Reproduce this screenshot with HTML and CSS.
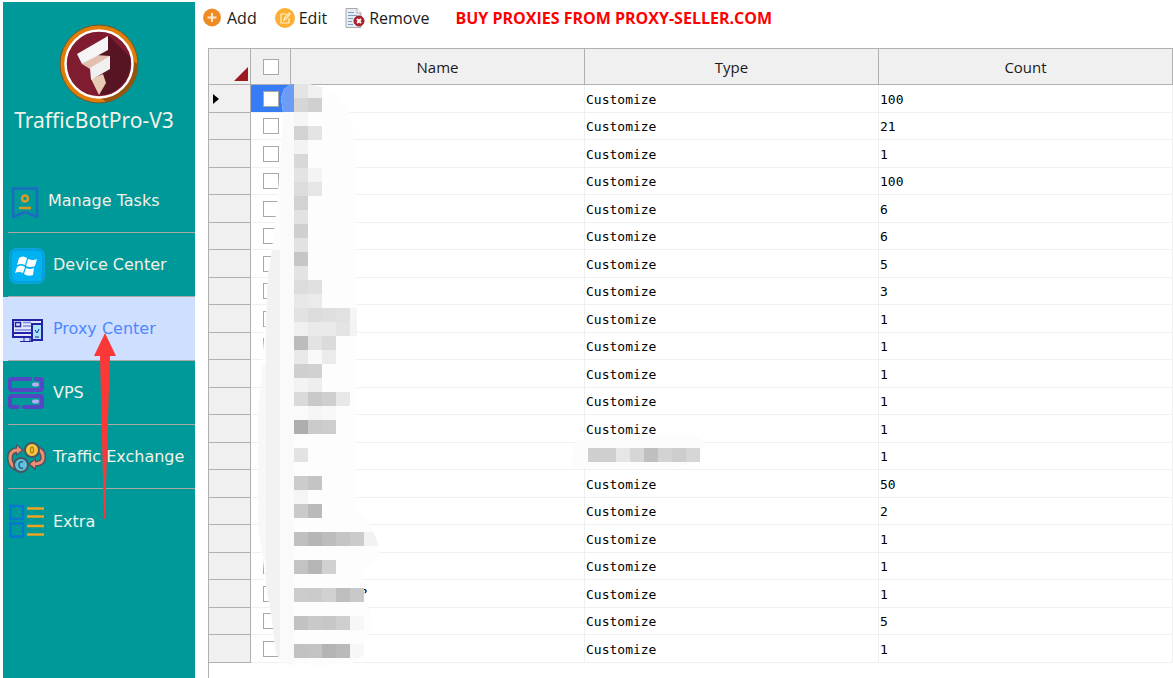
FILE: index.html
```html
<!DOCTYPE html>
<html lang="en">
<head>
    <meta charset="UTF-8">
    <meta name="viewport" content="width=device-width, initial-scale=1.0">
    <title>TrafficBotPro-V3</title>
    <link rel="stylesheet" href="styles.css">
</head>
<body>
    <aside class="sidebar">
      <svg class="logo" viewBox="0 0 80 80" aria-hidden="true">
        <circle cx="40" cy="40" r="39" fill="#e07d08" stroke="#6b5a2c" stroke-width="1"/>
        <path d="M79 40A39 39 0 0 1 47 78L40 72L72 36Z" fill="#96550f"/>
        <circle cx="40" cy="40" r="33.500" fill="#7f1c30" stroke="#fff" stroke-width="2.500"/>
        <path d="M50 12L71 33A32 32 0 0 1 44 71L39 69L31 55L36 44L24 39Z" fill="#571422"/>
        <path d="M23 40L37 31L51 32L50 38L31 45Z" fill="#e2bfae"/>
        <path d="M32 55L44 50L47 59L40 71Z" fill="#e8cbb4"/>
        <path d="M18 30L49 12V26L23 40Z" fill="#f5f5f5"/>
        <path d="M31 44L51 32V45L32 56Z" fill="#f0f0f0"/>
      </svg>
      <h1 class="brand">TrafficBotPro-V3</h1>
      <ul class="menu">
        <li>
          <a href="#tasks">
            <svg class="icon icon-small" viewBox="0 0 35 40" fill="none">
              <path d="M7 7.500H31V36L19 31L7 36Z" stroke="#1b6cc0" stroke-width="2.500" stroke-linejoin="round"/>
              <circle cx="19" cy="17.500" r="3" stroke="#d99a22" stroke-width="2.500"/>
              <path d="M13 27H25" stroke="#d99a22" stroke-width="2.500"/>
            </svg>
            Manage Tasks
          </a>
        </li>
        <li>
          <a href="#devices">
            <svg class="icon" viewBox="0 0 40 40">
              <rect x="3" y="3" width="36" height="36" rx="8" fill="#0aa5e2"/>
              <rect x="5" y="5" width="32" height="32" rx="6" fill="#00b2f2" stroke="#0894cf"/>
              <path d="M13 13Q17 10 21 13L19 20Q15 18 11 20ZM22 14Q27 16 31 14L29 21Q25 23 20 21ZM11 22Q15 19 19 22L17 28Q13 26 9 28ZM20 23Q24 25 28 23L27 30Q22 32 18 29Z" fill="#fff"/>
            </svg>
            Device Center
          </a>
        </li>
        <li class="active">
          <a href="#proxies">
            <svg class="icon" viewBox="0 0 40 40" fill="none" stroke="#2323a8">
              <path d="M7 11H36V28H7Z" fill="#e3e6ff" stroke-width="2"/>
              <path d="M7 24H26" stroke-width="2"/>
              <path d="M9.500 13.500H14.500V17.500H9.500Z" stroke-width="1.500"/>
              <path d="M17 13.500H25M17 17H25M9 21H25" stroke="#7b88dc" stroke-width="1.500"/>
              <path d="M18 28V32M24 28V32M14 32.500H27"/>
              <rect x="26" y="15" width="10" height="16" fill="#a9e4fb" stroke-width="2"/>
              <path d="M29 21L31 24L33 20M29 28H33"/>
            </svg>
            Proxy Center
          </a>
        </li>
        <li>
          <a href="#vps">
            <svg class="icon" viewBox="0 0 40 40" fill="none" stroke="#5546c4" stroke-width="4" stroke-linecap="round">
              <path d="M24 6H6Q4 6 4 8V15Q4 17 6 17H34Q36 17 36 15V8Q36 6 34 6H30"/>
              <path d="M12 34H6Q4 34 4 32V25Q4 23 6 23H34Q36 23 36 25V32Q36 34 34 34H18"/>
              <path d="M28 11.500H31M28 28.500H31" stroke="#b9aef5"/>
            </svg>
            VPS
          </a>
        </li>
        <li>
          <a href="#exchange">
            <svg class="icon" viewBox="0 0 40 40" fill="none">
              <path d="M10 31Q4 28 4 21Q4 13 13 13M30 12Q38 13 37 22Q36 27 28 27" stroke="#4a5560" stroke-width="6"/>
              <path d="M10 7L18 13L10 19ZM30 21L22 27L30 34Z" fill="#4a5560"/>
              <path d="M10 31Q4 28 4 21Q4 13 12 13M31 12Q38 14 37 22Q36 27 28 27" stroke="#ee8d70" stroke-width="3"/>
              <path d="M11 9L16 13L11 17ZM29 23L24 27L29 31Z" fill="#ee8d70"/>
              <circle cx="26" cy="13" r="7" fill="#fbc840" stroke="#4a5560" stroke-width="2"/>
              <ellipse cx="26" cy="13" rx="1.500" ry="3" stroke="#b98517" stroke-width="1.500"/>
              <circle cx="15" cy="28" r="7" fill="#62c1dd" stroke="#4a5560" stroke-width="2"/>
              <path d="M17 25Q13 24 13 28Q13 32 17 31" stroke="#23617a" stroke-width="1.500"/>
            </svg>
            Traffic Exchange
          </a>
        </li>
        <li>
          <a href="#extra">
            <svg class="icon" viewBox="0 0 40 40" fill="none" stroke-width="2.500">
              <path d="M4.500 5H17V18H4.500ZM4.500 22.500H17V35.500H4.500Z" stroke="#0478cf"/>
              <path d="M21 7.500H38M21 15.500H38M21 25H38M21 33.500H38" stroke="#eda321"/>
            </svg>
            Extra
          </a>
        </li>
      </ul>
    </aside>

    <main class="content">
      <div class="toolbar">
        <button type="button">
          <svg viewBox="0 0 20 20"><circle cx="9" cy="9.500" r="9" fill="#f08a24"/><path d="M9 5V14M4.500 9.500H13.500" stroke="#ffe9d2" stroke-width="2"/></svg>
          Add
        </button>
        <button type="button">
          <svg viewBox="0 0 20 20" fill="none"><circle cx="10" cy="10" r="10" fill="#fbb034"/><path d="M11 6H6V15H14V10M9 12L10 9L14 5L15 6L11 11Z" stroke="#fff0cf" stroke-width="1.200"/></svg>
          Edit
        </button>
        <button type="button">
          <svg viewBox="0 0 20 20"><path d="M1 .5H12L16 5V19.500H1Z" fill="#e9edf2" stroke="#a7a9ac"/><path d="M12 .5V5H16" fill="#fff" stroke="#a7a9ac"/><path d="M3 4.500H9M3 7.500H12M3 10.500H8M3 13.500H7M3 16.500H8" stroke="#7f9cc4"/><circle cx="14" cy="13" r="5" fill="#b5202f" stroke="#8c1a27"/><path d="M12 11L16 15M16 11L12 15" stroke="#fff" stroke-width="1.800"/></svg>
          Remove
        </button>
        <a class="promo" href="#buy">BUY PROXIES FROM PROXY-SELLER.COM</a>
      </div>

      <div class="grid">
        <table>
          <colgroup>
            <col class="col-marker">
            <col class="col-check">
            <col>
            <col>
            <col>
          </colgroup>
          <thead>
            <tr>
              <th class="corner"><svg viewBox="0 0 14 14"><path d="M14 0V14H0Z" fill="#9b1c20"/></svg></th>
              <th class="check"><input type="checkbox" aria-label="Select all"></th>
              <th>Name</th>
              <th>Type</th>
              <th>Count</th>
            </tr>
          </thead>
          <tbody>
            <tr class="current"><th><svg viewBox="0 0 6 10"><path d="M0 0L6 5L0 10Z"/></svg></th><td class="check"><input type="checkbox" aria-label="Select row"></td><td></td><td>Customize</td><td>100</td></tr>
            <tr><th></th><td class="check"><input type="checkbox" aria-label="Select row"></td><td></td><td>Customize</td><td>21</td></tr>
            <tr><th></th><td class="check"><input type="checkbox" aria-label="Select row"></td><td></td><td>Customize</td><td>1</td></tr>
            <tr><th></th><td class="check"><input type="checkbox" aria-label="Select row"></td><td></td><td>Customize</td><td>100</td></tr>
            <tr><th></th><td class="check"><input type="checkbox" aria-label="Select row"></td><td></td><td>Customize</td><td>6</td></tr>
            <tr><th></th><td class="check"><input type="checkbox" aria-label="Select row"></td><td></td><td>Customize</td><td>6</td></tr>
            <tr><th></th><td class="check"><input type="checkbox" aria-label="Select row"></td><td></td><td>Customize</td><td>5</td></tr>
            <tr><th></th><td class="check"><input type="checkbox" aria-label="Select row"></td><td></td><td>Customize</td><td>3</td></tr>
            <tr><th></th><td class="check"><input type="checkbox" aria-label="Select row"></td><td></td><td>Customize</td><td>1</td></tr>
            <tr><th></th><td class="check"><input type="checkbox" aria-label="Select row"></td><td></td><td>Customize</td><td>1</td></tr>
            <tr><th></th><td class="check"><input type="checkbox" aria-label="Select row"></td><td></td><td>Customize</td><td>1</td></tr>
            <tr><th></th><td class="check"><input type="checkbox" aria-label="Select row"></td><td></td><td>Customize</td><td>1</td></tr>
            <tr><th></th><td class="check"><input type="checkbox" aria-label="Select row"></td><td></td><td>Customize</td><td>1</td></tr>
            <tr><th></th><td class="check"><input type="checkbox" aria-label="Select row"></td><td></td><td class="masked"><svg class="mask-type" viewBox="572 434 136 36"><path d="M572 450Q576 438 588 438L640 435H690Q704 438 703 446Q702 456 696 462L672 468H572Z" fill="#fcfcfc"/></svg></td><td>1</td></tr>
            <tr><th></th><td class="check"><input type="checkbox" aria-label="Select row"></td><td></td><td>Customize</td><td>50</td></tr>
            <tr><th></th><td class="check"><input type="checkbox" aria-label="Select row"></td><td></td><td>Customize</td><td>2</td></tr>
            <tr><th></th><td class="check"><input type="checkbox" aria-label="Select row"></td><td></td><td>Customize</td><td>1</td></tr>
            <tr><th></th><td class="check"><input type="checkbox" aria-label="Select row"></td><td></td><td>Customize</td><td>1</td></tr>
            <tr><th></th><td class="check"><input type="checkbox" aria-label="Select row"></td><td></td><td>Customize</td><td>1</td></tr>
            <tr><th></th><td class="check"><input type="checkbox" aria-label="Select row"></td><td></td><td>Customize</td><td>5</td></tr>
            <tr><th></th><td class="check"><input type="checkbox" aria-label="Select row"></td><td></td><td>Customize</td><td>1</td></tr>
          </tbody>
        </table>

        <svg class="mask-names" viewBox="250 84 136 586">
          <clipPath id="brush">
            <path d="M291 84L284 89L281 98L283 112L280 165L277 205L272 250L268 275L266 320L263 350L262 370L258 415V530L262 550L265 580L272 620L276 654L285 664L294 665L305 662L320 669L335 662L350 665L364 655V640L371 630V615L367 602L364 590L362 570L373 564L380 556L377 540L370 525L357 510V330L356 150L350 112L340 97L325 88L308 84Z"/>
          </clipPath>
          <text class="leftover" x="360" y="598">?</text>
          <g id="names" clip-path="url(#brush)">
            <path d="M250 84H386V670H250Z" fill="#fdfdfd"/>
            <path d="M250 364H266V560H250Z" fill="#f8f8f8"/>
            <path d="M266 250H280V670H266Z" fill="#f2f2f2"/>
            <path d="M280 112H294V670H280Z" fill="#fafafa"/>
            <path d="M280 84H294V112H280Z" fill="#6c9cf6"/>
          </g>
        </svg>
      </div>
    </main>

    <svg class="pointer" viewBox="0 0 24 186" aria-hidden="true">
      <path d="M12 0L23 23H17L12 186H11L7 23H1Z" fill="#fb3838"/>
    </svg>

    <script>
      const size = 14;

      // grey levels per line of mosaic, left to right
      const names = {
        84: "e4 f0", 98: "d6 d0", 112: "f5", 126: "d2 e4", 140: "f3", 154: "d8",
        168: "e3 f4", 182: "dc e6", 196: "d2", 210: "e2", 224: "cf", 238: "e2",
        252: "c6", 266: "e3", 280: "dc e0", 294: "e8 eb", 308: "e2 dc df e1 f5",
        322: "f0 ea ea e4 f3", 336: "bc e3 db", 350: "e9 f9 eb", 364: "cf d1",
        378: "f3 ee", 392: "da c9 cf e8", 406: "fa f6 f8", 420: "ae cb cd",
        448: "e3", 476: "cc c4", 490: "f5", 504: "ca ba", 532: "c0 b6 bd c5 cb f2",
        560: "c3 b6 d1", 588: "cc cb d1 be c9", 616: "c2 c9 c7 cf f7", 644: "c2 c3 b4 ba f7"
      };

      function drawLine(parent, x, y, line) {
        line.split(" ").forEach((grey, i) => {
          const rect = document.createElementNS("http://www.w3.org/2000/svg", "rect");
          rect.setAttribute("x", x + i * size);
          rect.setAttribute("y", y);
          rect.setAttribute("width", size);
          rect.setAttribute("height", size);
          rect.setAttribute("fill", "#" + grey.repeat(3));
          parent.appendChild(rect);
        });
      }

      for (const y in names) {
        drawLine(document.getElementById("names"), 294, Number(y), names[y]);
      }
      drawLine(document.querySelector(".mask-type"), 588, 448, "cf cf e6 d6 bf d3 cd d6");
    </script>
</body>
</html>
```
FILE: styles.css
```css
* {
  box-sizing: border-box;
}
body {
  margin: 0;
  min-height: 100vh;
  display: flex;
  position: relative;
  background-color: #fff;
  color: #1a1a1a;
  font-family: "Open Sans", "Noto Sans", sans-serif;
  font-size: 16px;
}
.sidebar {
  flex: 0 0 192px;
  margin: 2px 0 0 3px;
  padding-top: 22px;
  background-color: #009999;
}
.logo {
  display: block;
  width: 80px;
  height: 80px;
  margin: 0 auto;
}
.brand {
  margin: 0 0 33px;
  padding-right: 10px;
  text-align: center;
  color: #f2f2e8;
  font-family: "Noto Sans", sans-serif;
  font-size: 21px;
  font-weight: normal;
  line-height: 32px;
}
.menu {
  list-style: none;
  margin: 0;
  padding: 0;
}
.menu a {
  display: flex;
  align-items: center;
  height: 64px;
  margin-left: 5px;
  border-bottom: 1px solid #b0a8a4;
  color: #f2f2e8;
  font-family: "DejaVu Sans", sans-serif;
  font-size: 16px;
  text-decoration: none;
  white-space: nowrap;
}
.menu li:last-child a {
  border-bottom: none;
}
.menu .active {
  background-color: #cfdfff;
}
.menu .active a {
  color: #4d88ff;
}
.icon {
  flex: none;
  width: 40px;
  height: 40px;
  margin: 0 7px 0 -2px;
}
.icon-small {
  width: 35px;
}
.content {
  flex: 1;
  min-width: 0;
  display: flex;
  flex-direction: column;
}
.toolbar {
  display: flex;
  align-items: center;
  height: 36px;
  margin-bottom: 12px;
  padding-left: 8px;
  gap: 18px;
}
.toolbar button {
  display: flex;
  align-items: center;
  gap: 4px;
  padding: 0;
  border: none;
  background: none;
  color: #1a1a1a;
  font: inherit;
}
.toolbar svg {
  width: 20px;
  height: 20px;
}
.promo {
  margin-left: 8px;
  color: #ff0000;
  font-weight: bold;
  text-decoration: none;
}
.grid {
  flex: 1;
  position: relative;
  margin-left: 13px;
  border-left: 1px solid #b0b0b0;
}
table {
  width: 100%;
  table-layout: fixed;
  border-collapse: separate;
  border-spacing: 0;
  border-top: 1px solid #b0b0b0;
}
.col-marker {
  width: 42px;
}
.col-check {
  width: 40px;
}
th {
  padding: 0;
  border-right: 1px solid #b0b0b0;
  border-bottom: 1px solid #b0b0b0;
  background-color: #f0f0f0;
  font-size: 15px;
  font-weight: normal;
}
thead th {
  height: 36px;
}
.corner {
  padding-right: 2px;
  text-align: right;
  vertical-align: bottom;
}
.corner svg {
  display: block;
  width: 14px;
  height: 14px;
  margin: 0 0 3px auto;
}
td {
  padding: 2px 0 0 1px;
  border-right: 1px solid #f0f0f0;
  border-bottom: 1px solid #f0f0f0;
  color: #000;
  font-family: "DejaVu Sans Mono", monospace;
  font-size: 13px;
  line-height: 16px;
}
tbody tr {
  height: 28px;
}
tbody tr:nth-child(even) {
  height: 27px;
}
.check {
  padding: 0;
  text-align: center;
}
td.check {
  border-right: none;
}
.check input {
  display: block;
  appearance: none;
  width: 16px;
  height: 16px;
  margin: 0 auto;
  border: 1px solid #a8a8a8;
  background-color: #fff;
}
.current .check {
  background-color: #357cf6;
}
.current svg {
  display: block;
  width: 6px;
  height: 10px;
  margin-left: 4px;
}
.masked {
  position: relative;
}
.mask-type {
  position: absolute;
  left: -13px;
  top: -9px;
  width: 136px;
  height: 36px;
}
.mask-names {
  position: absolute;
  left: 41px;
  top: 36px;
  width: 136px;
  height: 586px;
}
.leftover {
  font-family: "DejaVu Sans Mono", monospace;
  font-size: 13px;
}
.pointer {
  position: absolute;
  left: 93px;
  top: 333px;
  width: 24px;
  height: 186px;
}
```
